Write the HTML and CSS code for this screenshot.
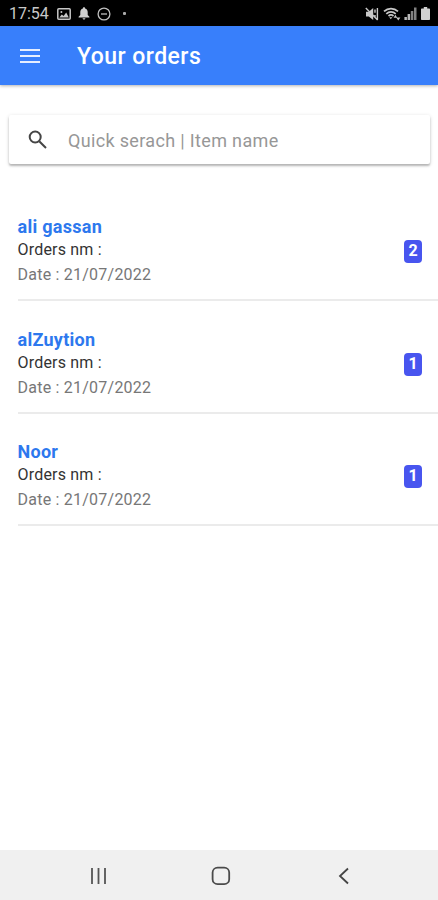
FILE: index.html
```html
<!DOCTYPE html>
<html lang="en">
  <head>
    <meta charset="UTF-8" />
    <meta name="viewport" content="width=device-width, initial-scale=1.0" />
    <title>Your orders</title>
    <link rel="stylesheet" href="styles.css">
  </head>
  <body>
    <div class="status-bar">
      <span class="time">17:54</span>
      <svg class="picture" width="14" height="12" viewBox="0 0 14 12">
        <rect x="0.8" y="0.8" width="12.4" height="10.4" rx="1" fill="none" stroke="#c8c8c8" stroke-width="1.5" />
        <path d="M2.3 9.5L4.8 6.4L6.6 8L9.2 4.6L11.8 9.5Z" fill="#c8c8c8" />
        <circle cx="4.4" cy="3.9" r="1" fill="#c8c8c8" />
      </svg>
      <svg class="bell" width="12" height="13" viewBox="0 0 12 13">
        <path d="M6 0.3C6.8 0.3 7.1 0.8 7.1 1.4C9 2 9.7 3.5 9.7 5.2V8L11.4 9.8V10.5H0.6V9.8L2.3 8V5.2C2.3 3.5 3 2 4.9 1.4C4.9 0.8 5.2 0.3 6 0.3ZM4.6 11.2H7.4C7.4 13 4.6 13 4.6 11.2Z" fill="#d0d0d0" />
      </svg>
      <svg class="dnd" width="14" height="14" viewBox="0 0 14 14" fill="none" stroke="#c0c0c0" stroke-width="1.3">
        <circle cx="7" cy="7" r="5.9" />
        <path d="M4 7H10" />
      </svg>
      <span class="dot"></span>
      <div class="status-right">
        <svg width="14" height="14" viewBox="0 0 14 14">
          <path d="M1 4.8H3.8L8.2 1V13L3.8 9.4H1Z" fill="#c8c8c8" />
          <path d="M0.8 1L12.6 13M10 2.5V5.8M10 8V10M12.4 1V13" fill="none" stroke="#c8c8c8" stroke-width="1.4" />
        </svg>
        <svg class="wifi" width="18" height="14" viewBox="0 0 18 14">
          <path d="M1 4.4C5 0.6 11 0.6 15 4.4M3.3 6.8C6 4.3 10 4.3 12.7 6.8M5.5 9C7 7.7 9 7.7 10.5 9" fill="none" stroke="#c8c8c8" stroke-width="1.7" />
          <path d="M6.2 10.2H9.4L7.8 12.2ZM10.6 10.8L12.4 7.8L14.2 10.8ZM13.2 10.4H17.4L15.3 13.4Z" fill="#c8c8c8" />
        </svg>
        <svg class="signal" width="13" height="13" viewBox="0 0 13 13">
          <path d="M0.4 10H2.9V13H0.4ZM3.6 7H6.1V13H3.6Z" fill="#b8b8b8" />
          <path d="M6.8 4H9.3V13H6.8ZM10 0.5H12.5V13H10Z" fill="#828282" />
        </svg>
        <svg class="battery" width="9" height="13" viewBox="0 0 9 13">
          <path d="M2.8 0H6.2V1.5H8C8.6 1.5 9 1.9 9 2.5V12C9 12.6 8.6 13 8 13H1C0.4 13 0 12.6 0 12V2.5C0 1.9 0.4 1.5 1 1.5H2.8Z" fill="#d0d0d0" />
        </svg>
      </div>
    </div>

    <header class="toolbar">
      <button class="menu" aria-label="Menu">
        <span></span>
        <span></span>
        <span></span>
      </button>
      <h1>Your orders</h1>
    </header>

    <main class="content">
      <form class="search">
        <svg width="20" height="20" viewBox="0 0 20 20" fill="none" stroke="#454545" stroke-width="2">
          <circle cx="7.2" cy="7" r="5.5" />
          <path d="M11.2 11.2L18 18" />
        </svg>
        <input type="text" name="search" placeholder="Quick serach | Item name" />
      </form>

      <ul class="orders">
        <li>
          <div>
            <h2>ali gassan</h2>
            <h3>Orders nm :</h3>
            <p>Date : 21/07/2022</p>
          </div>
          <span class="badge">2</span>
        </li>
        <li>
          <div>
            <h2>alZuytion</h2>
            <h3>Orders nm :</h3>
            <p>Date : 21/07/2022</p>
          </div>
          <span class="badge">1</span>
        </li>
        <li>
          <div>
            <h2>Noor</h2>
            <h3>Orders nm :</h3>
            <p>Date : 21/07/2022</p>
          </div>
          <span class="badge">1</span>
        </li>
      </ul>
    </main>

    <nav class="nav-bar">
      <svg width="20" height="20" viewBox="0 0 20 20" fill="none" stroke="#555" stroke-width="1.8">
        <path d="M4 2V18M10.5 2V18M17 2V18" />
      </svg>
      <svg width="20" height="20" viewBox="0 0 20 20" fill="none" stroke="#4a4a4a" stroke-width="1.8">
        <rect x="1.6" y="1.6" width="16.6" height="16.6" rx="5" />
      </svg>
      <svg width="20" height="20" viewBox="0 0 20 20" fill="none" stroke="#444" stroke-width="1.8">
        <path d="M14 2.5L6 10L14 17.5" />
      </svg>
    </nav>
  </body>
</html>
```
FILE: styles.css
```css
* {
  margin: 0;
  padding: 0;
  box-sizing: border-box;
  font-family: Roboto, sans-serif;
}
body {
  display: flex;
  flex-direction: column;
  height: 100vh;
  background: #fff;
  overflow: hidden;
}

.status-bar {
  display: flex;
  align-items: center;
  height: 26px;
  padding: 1px 8px 0 9px;
  background: #000;
}
.time {
  width: 48px;
  padding-top: 1px;
  color: #c8c8c8;
  font-size: 16px;
  line-height: 20px;
}
.bell {
  margin-left: 7px;
}
.dnd {
  margin-left: 7px;
}
.dot {
  width: 3px;
  height: 3px;
  margin-left: 12px;
  background: #aaa;
  border-radius: 1px;
}
.status-right {
  display: flex;
  align-items: center;
  margin-left: auto;
}
.wifi {
  margin-left: 4px;
}
.signal {
  margin-left: 3px;
}
.battery {
  margin-left: 4px;
}

.toolbar {
  display: flex;
  align-items: center;
  height: 59px;
  padding-left: 20px;
  background: #387ffb;
  box-shadow: 0 1px 3px rgba(0, 0, 0, 0.3);
}
.menu {
  display: flex;
  flex-direction: column;
  gap: 4px;
  width: 20px;
  margin-right: 37px;
  background: none;
  border: none;
}
.menu span {
  height: 2px;
  background: #e6eeff;
}
h1 {
  padding-top: 2px;
  color: #fff;
  font-size: 23px;
  font-weight: 500;
  line-height: 28px;
  letter-spacing: 0.45px;
}

.content {
  flex: 1;
  padding-top: 30px;
}
.search {
  display: flex;
  align-items: center;
  height: 49px;
  margin: 0 8px 0 9px;
  padding-left: 19px;
  border-radius: 2px;
  box-shadow: 0 2px 2px rgba(0, 0, 0, 0.22), 0 1px 4px rgba(0, 0, 0, 0.14);
}
.search input {
  flex: 1;
  margin-left: 20px;
  padding-top: 1px;
  background: transparent;
  border: none;
  outline: none;
  font-size: 18px;
  letter-spacing: 0.34px;
}
.search input::placeholder {
  color: #979797;
}

.orders {
  margin-top: 24px;
  padding-left: 17.5px;
  list-style: none;
}
.orders li {
  display: flex;
  justify-content: space-between;
  height: 112.8px;
  padding: 27.8px 16px 0 0;
  border-bottom: 2px solid #ebebeb;
}
h2 {
  color: #2d78ee;
  font-size: 18px;
  font-weight: 700;
  line-height: 22px;
  letter-spacing: 0.28px;
}
h3 {
  color: #333;
  font-size: 16px;
  font-weight: 400;
  line-height: 24px;
  letter-spacing: 0.2px;
}
.orders p {
  color: #777;
  font-size: 16px;
  line-height: 26px;
  letter-spacing: 0.23px;
}
.badge {
  width: 18px;
  height: 23px;
  margin-top: 24px;
  color: #fff;
  background: #4855ef;
  border-radius: 4px;
  font-size: 16px;
  font-weight: 700;
  line-height: 22px;
  text-align: center;
}

.nav-bar {
  display: flex;
  justify-content: space-between;
  align-items: center;
  height: 50px;
  padding: 2px 84px 0 88px;
  background: #f0f0f0;
}
```
